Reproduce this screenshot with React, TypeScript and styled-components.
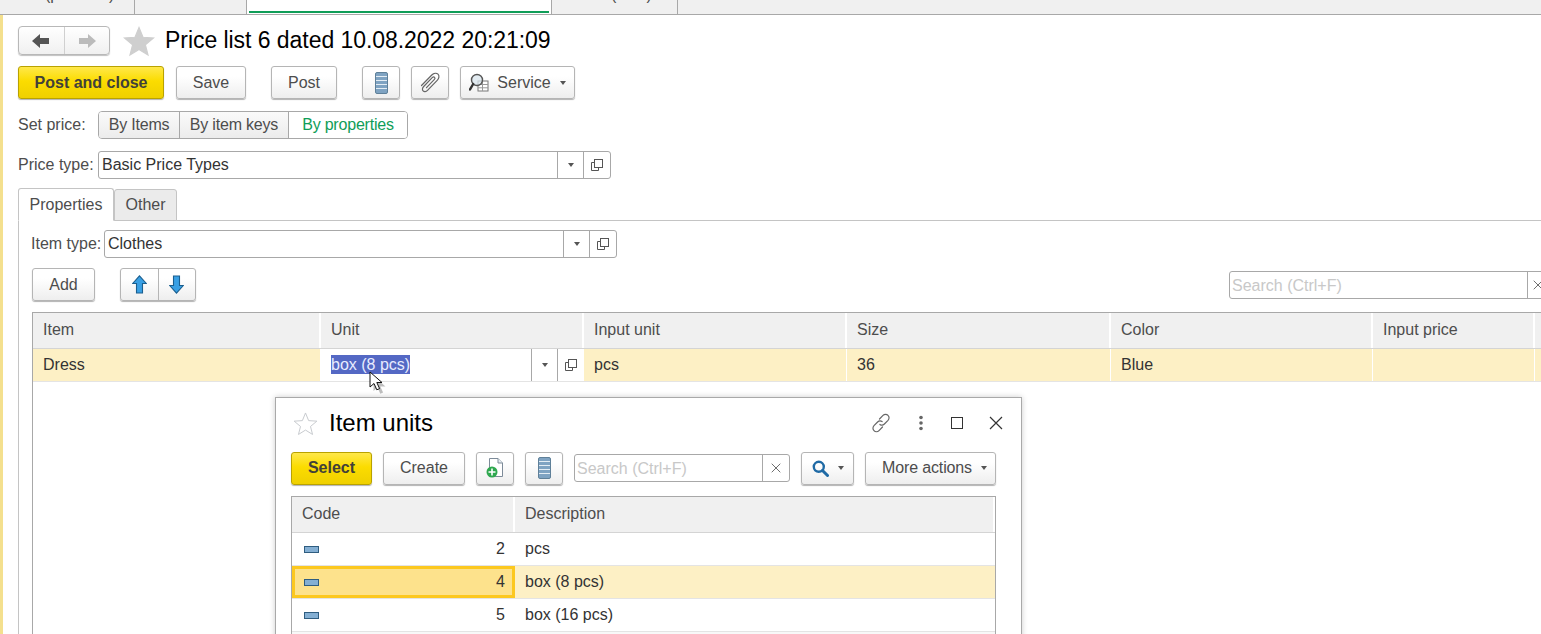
import styled, { createGlobalStyle, css } from "styled-components"

const GlobalStyle = createGlobalStyle`
    html, body {
        margin: 0;
        padding: 0;
        background: #fff;
        overflow: hidden;
    }
    body {
        font-family: "Liberation Sans", Arial, sans-serif;
        font-size: 16px;
        color: #4d4d4d;
    }
    * {
        box-sizing: border-box;
    }
`

const ListIcon = () => (
    <svg width="13" height="22" viewBox="0 0 13 22">
        <rect x="0.5" y="0.5" width="12" height="21" rx="1.5" fill="#7fa3c2" stroke="#5f8099" />
        <path d="M1 4.500h11M1 8.500h11M1 12.500h11M1 16.500h11" stroke="#e4edf4" strokeWidth="1.2" />
    </svg>
)

const ClipIcon = () => (
    <svg width="24" height="24" viewBox="0 0 24 24" fill="none" stroke="#666" strokeWidth="1.2" strokeLinecap="round">
        <path d="M3.500 14.500 13.800 4c2-2 4.700-2.300 6.200-.8 1.500 1.500 1.200 4.100-.8 6.100L9.500 19.300c-1.400 1.400-3.300 1.700-4.400.6-1.100-1.100-.8-3 .6-4.400l8.500-8.800c.8-.8 1.800-1 2.400-.4.600.6.400 1.600-.4 2.400l-7.700 8" />
    </svg>
)

const ServiceIcon = () => (
    <svg width="20" height="20" viewBox="0 0 20 20" fill="none">
        <rect x="9" y="8" width="10" height="10" fill="#fff" stroke="#777" />
        <path d="M9 11.500h10M9 14.800h10M13.500 8v10" stroke="#999" />
        <circle cx="8" cy="7" r="5.500" fill="#d9e6ee" fillOpacity="0.75" stroke="#555" strokeWidth="1.4" />
        <path d="M4.200 11 1 16.500" stroke="#333" strokeWidth="2.4" strokeLinecap="round" />
    </svg>
)

const CopyIcon = () => (
    <svg width="12" height="12" viewBox="0 0 12 12" fill="none" stroke="#555">
        <path d="M3.500 3.500H.5v8h7V8.500" />
        <rect x="3.500" y="0.500" width="8" height="8" fill="#fff" />
    </svg>
)

const LeftArrow = ({ tone }: { tone: string }) => (
    <svg width="18" height="14" viewBox="0 0 18 14">
        <path d="M0 7 8 0v4h9v6H8v4z" fill={tone} />
    </svg>
)

const RightArrow = ({ tone }: { tone: string }) => (
    <svg width="18" height="14" viewBox="0 0 18 14">
        <path d="M18 7 10 0v4H1v6h9v4z" fill={tone} />
    </svg>
)

const BlueUp = () => (
    <svg width="15" height="19" viewBox="0 0 15 19">
        <path d="M7.500.8 14.300 8.500H10.500V18H4.500V8.500H.7z" fill="#39a0e4" stroke="#1b5f8f" strokeWidth="1.1" />
    </svg>
)

const BlueDown = () => (
    <svg width="15" height="19" viewBox="0 0 15 19">
        <path d="M7.500 18.200 14.300 10.500H10.500V1H4.500V10.500H.7z" fill="#39a0e4" stroke="#1b5f8f" strokeWidth="1.1" />
    </svg>
)

const StarIcon = ({ filled }: { filled?: boolean }) => (
    <svg width="32" height="32" viewBox="0 0 32 32">
        <path
            d="M16 2.500 20 12.300 30.500 13 22.400 19.800 25 30 16 24.400 7 30 9.600 19.800 1.500 13 12 12.300z"
            fill={filled ? "#cfcfcf" : "#fff"}
            stroke={filled ? "#cfcfcf" : "#c4c8cc"}
            strokeWidth="1.2"
        />
    </svg>
)

const LinkIcon = () => (
    <svg width="22" height="22" viewBox="0 0 22 22" fill="none" stroke="#666" strokeWidth="1.2" strokeLinecap="round">
        <path d="M9.500 7 13 3.400c1.500-1.500 3.700-1.500 5 0 1.400 1.300 1.400 3.500 0 5L14.400 12c-1.300 1.300-3.200 1.400-4.500.4" />
        <path d="M12.500 15 9 18.600c-1.500 1.500-3.700 1.500-5 0-1.400-1.300-1.400-3.500 0-5L7.600 10c1.300-1.300 3.200-1.400 4.500-.4" />
    </svg>
)

const DotsIcon = () => (
    <svg width="6" height="16" viewBox="0 0 6 16" fill="#666">
        <circle cx="3" cy="2.500" r="1.800" />
        <circle cx="3" cy="8" r="1.800" />
        <circle cx="3" cy="13.500" r="1.800" />
    </svg>
)

const SquareIcon = () => (
    <svg width="12" height="12" viewBox="0 0 12 12" fill="none" stroke="#333">
        <rect x="0.5" y="0.5" width="11" height="11" />
    </svg>
)

const CloseIcon = ({ size, tone }: { size: number; tone: string }) => (
    <svg width={size} height={size} viewBox="0 0 14 14" fill="none" stroke={tone} strokeWidth="1.2">
        <path d="M1 1l12 12M13 1 1 13" />
    </svg>
)

const DocAddIcon = () => (
    <svg width="18" height="20" viewBox="0 0 18 20">
        <path d="M3.500.5H12L16.500 5v13.500H3.500z" fill="#fff" stroke="#7d8b99" />
        <path d="M12 .5V5h4.500" fill="#e8edf2" stroke="#7d8b99" />
        <circle cx="6" cy="14" r="5.500" fill="#2fa84f" />
        <path d="M6 10.500v7M2.500 14h7" stroke="#fff" strokeWidth="1.6" />
    </svg>
)

const SearchIcon = () => (
    <svg width="17" height="17" viewBox="0 0 17 17" fill="none" stroke="#1f6aa5">
        <circle cx="6.800" cy="6.800" r="5" strokeWidth="2.4" />
        <path d="M10.500 10.500 15.500 15.500" strokeWidth="3" strokeLinecap="round" />
    </svg>
)

const UnitIcon = () => (
    <svg width="15" height="7" viewBox="0 0 15 7">
        <rect x="0.5" y="0.5" width="14" height="6" fill="#84afd3" stroke="#2f5d80" />
    </svg>
)

const CursorIcon = () => (
    <svg width="24" height="26" viewBox="0 0 24 26">
        <path d="M3 3v15l4-3.500 2.800 6.300 2.800-1.200-2.800-6.100H15z" fill="#444" opacity="0.35" transform="translate(2.500 2)" />
        <path d="M2 1v15l4-3.500 2.800 6.300 2.800-1.200-2.800-6.100H14z" fill="#fff" stroke="#111" strokeWidth="1" />
    </svg>
)

const tabsData = [
    { width: 135, text: "(price list)", pad: 45 },
    { width: 112, text: "", pad: 0 },
    { width: 305, text: "", pad: 0, active: true },
    { width: 126, text: "(item)", pad: 59 },
]

const columns = ["Item", "Unit", "Input unit", "Size", "Color", "Input price", ""]

function App() {
    return (
        <Page>
            <GlobalStyle />
            <TopBar>
                {tabsData.map((tab, i) => (
                    <TopTab key={i} $width={tab.width} $pad={tab.pad} $active={tab.active}>
                        <TopTabText>{tab.text}</TopTabText>
                    </TopTab>
                ))}
            </TopBar>
            <Body>
                <Title>
                    <NavGroup>
                        <NavButton>
                            <LeftArrow tone="#555" />
                        </NavButton>
                        <NavButton>
                            <RightArrow tone="#bbb" />
                        </NavButton>
                    </NavGroup>
                    <StarSlot>
                        <StarIcon filled />
                    </StarSlot>
                    <Heading>Price list 6 dated 10.08.2022 20:21:09</Heading>
                </Title>

                <Toolbar>
                    <Button $primary $width={146} $height={33} $after={12}>
                        Post and close
                    </Button>
                    <Button $width={70} $height={33} $after={25}>
                        Save
                    </Button>
                    <Button $width={66} $height={33} $after={25}>
                        Post
                    </Button>
                    <Button $width={38} $height={33} $after={11}>
                        <ListIcon />
                    </Button>
                    <Button $width={38} $height={33} $after={11}>
                        <ClipIcon />
                    </Button>
                    <Button $width={115} $height={33}>
                        <ServiceIcon />
                        <ButtonLabel $left={8}>Service</ButtonLabel>
                        <Caret $left={9} />
                    </Button>
                </Toolbar>

                <FormRow $top={12}>
                    <Label $width={80}>Set price:</Label>
                    <Switcher>
                        <SwitchItem $width={80}>By Items</SwitchItem>
                        <SwitchItem $width={109}>By item keys</SwitchItem>
                        <SwitchItem $width={119} $active>
                            By properties
                        </SwitchItem>
                    </Switcher>
                </FormRow>

                <FormRow $top={12}>
                    <Label $width={80}>Price type:</Label>
                    <Field $width={513}>
                        <FieldText>Basic Price Types</FieldText>
                        <FieldButton $width={26}>
                            <Caret />
                        </FieldButton>
                        <FieldButton $width={27}>
                            <CopyIcon />
                        </FieldButton>
                    </Field>
                </FormRow>

                <TabStrip>
                    <PanelTab $active>Properties</PanelTab>
                    <PanelTab>Other</PanelTab>
                </TabStrip>

                <Panel>
                    <FormRow $top={9} $left={-1}>
                        <Label $width={73}>Item type:</Label>
                        <Field $width={513}>
                            <FieldText>Clothes</FieldText>
                            <FieldButton $width={26}>
                                <Caret />
                            </FieldButton>
                            <FieldButton $width={27}>
                                <CopyIcon />
                            </FieldButton>
                        </Field>
                    </FormRow>

                    <CommandRow>
                        <Button $width={63} $height={33} $after={25}>
                            Add
                        </Button>
                        <ArrowGroup>
                            <ArrowButton>
                                <BlueUp />
                            </ArrowButton>
                            <ArrowButton>
                                <BlueDown />
                            </ArrowButton>
                        </ArrowGroup>
                        <SearchBox $width={320} $push>
                            <SearchText>Search (Ctrl+F)</SearchText>
                            <SearchClear $width={21}>
                                <CloseIcon size={10} tone="#555" />
                            </SearchClear>
                        </SearchBox>
                    </CommandRow>

                    <GridTable>
                        <HeaderRow>
                            {columns.map((title, i) => (
                                <HeaderCell key={i}>{title}</HeaderCell>
                            ))}
                        </HeaderRow>
                        <MainRow>
                            <RowCell>Dress</RowCell>
                            <EditCell>
                                <EditValue>
                                    <Selected>box (8 pcs)</Selected>
                                </EditValue>
                                <EditButton $width={26}>
                                    <Caret />
                                </EditButton>
                                <EditButton $width={27}>
                                    <CopyIcon />
                                </EditButton>
                            </EditCell>
                            <RowCell>pcs</RowCell>
                            <RowCell>36</RowCell>
                            <RowCell>Blue</RowCell>
                            <RowCell />
                            <RowCell />
                        </MainRow>
                    </GridTable>
                </Panel>
            </Body>

            <MouseCursor>
                <CursorIcon />
            </MouseCursor>

            <Popup>
                <PopupHead>
                    <PopupStar>
                        <StarIcon />
                    </PopupStar>
                    <PopupTitle>Item units</PopupTitle>
                    <PopupActions>
                        <LinkIcon />
                        <DotsIcon />
                        <SquareIcon />
                        <CloseIcon size={14} tone="#333" />
                    </PopupActions>
                </PopupHead>
                <PopupToolbar>
                    <Button $primary $width={81} $height={33} $after={11}>
                        Select
                    </Button>
                    <Button $width={82} $height={33} $after={11}>
                        Create
                    </Button>
                    <Button $width={38} $height={33} $after={11}>
                        <DocAddIcon />
                    </Button>
                    <Button $width={38} $height={33} $after={11}>
                        <ListIcon />
                    </Button>
                    <SearchBox $width={216}>
                        <SearchText>Search (Ctrl+F)</SearchText>
                        <SearchClear $width={27}>
                            <CloseIcon size={10} tone="#555" />
                        </SearchClear>
                    </SearchBox>
                    <Button $width={53} $height={33} $before={11} $after={11}>
                        <SearchIcon />
                        <Caret $left={9} />
                    </Button>
                    <Button $width={131} $height={33}>
                        <ButtonLabel $tight>More actions</ButtonLabel>
                        <Caret $left={9} />
                    </Button>
                </PopupToolbar>
                <PopupTable>
                    <PopupHeader>
                        <HeaderCell>Code</HeaderCell>
                        <HeaderCell>Description</HeaderCell>
                    </PopupHeader>
                    {[
                        { code: 2, name: "pcs" },
                        { code: 4, name: "box (8 pcs)", current: true },
                        { code: 5, name: "box (16 pcs)" },
                    ].map((row) => (
                        <PopupRow key={row.code} $current={row.current}>
                            <CodeCell $current={row.current}>
                                <UnitIcon />
                                <span>{row.code}</span>
                            </CodeCell>
                            <NameCell>{row.name}</NameCell>
                        </PopupRow>
                    ))}
                    <PopupFiller />
                </PopupTable>
            </Popup>
        </Page>
    )
}

export default App

const Page = styled.div`
    position: relative;
    width: 1541px;
    height: 634px;
    overflow: hidden;
    display: flex;
    flex-direction: column;
`

const TopBar = styled.div`
    height: 15px;
    flex: none;
    display: flex;
    background: #f0f0f0;
    border-bottom: 1px solid #a8a8a8;
`

const TopTab = styled.div<{ $width: number; $pad: number; $active?: boolean }>`
    width: ${(p) => p.$width}px;
    padding-left: ${(p) => p.$pad}px;
    border-right: 1px solid #a8a8a8;
    overflow: hidden;
    ${(p) =>
        p.$active &&
        css`
            background: #fff;
            position: relative;
            &::after {
                content: "";
                position: absolute;
                left: 2px;
                right: 2px;
                bottom: 1px;
                height: 2px;
                background: #0f9d58;
            }
        `}
`

const TopTabText = styled.div`
    margin-top: -13px;
    font-size: 16px;
    line-height: 16px;
    white-space: nowrap;
    color: #4d4d4d;
`

const Body = styled.div`
    flex: 1;
    min-height: 0;
    display: flex;
    flex-direction: column;
    border-left: 3px solid #f4e08e;
    padding-top: 11px;
    padding-left: 15px;
`

const Title = styled.div`
    display: flex;
    align-items: center;
    height: 29px;
`

const NavGroup = styled.div`
    display: flex;
    width: 92px;
    height: 29px;
    border: 1px solid #b8b8b8;
    border-radius: 4px;
    box-shadow: 0 1px 1px rgba(0, 0, 0, 0.25);
    background: linear-gradient(#fff, #f0f0f0);
`

const NavButton = styled.div`
    flex: 1;
    display: flex;
    align-items: center;
    justify-content: center;
    & + & {
        border-left: 1px solid #d0d0d0;
    }
`

const StarSlot = styled.div`
    display: flex;
    margin-left: 13px;
    width: 42px;
`

const Heading = styled.h1`
    margin: 0;
    font-size: 23px;
    font-weight: 400;
    letter-spacing: -0.05px;
    color: #000;
    white-space: nowrap;
`

const Toolbar = styled.div`
    display: flex;
    margin-top: 11px;
`

const Button = styled.div<{
    $primary?: boolean
    $width: number
    $height: number
    $after?: number
    $before?: number
}>`
    display: flex;
    align-items: center;
    justify-content: center;
    flex: none;
    width: ${(p) => p.$width}px;
    height: ${(p) => p.$height}px;
    margin-right: ${(p) => p.$after ?? 0}px;
    margin-left: ${(p) => p.$before ?? 0}px;
    border-radius: 3px;
    font-size: 16px;
    color: #4d4d4d;
    border: 1px solid #b5b5b5;
    background: linear-gradient(#fff 30%, #eeeeee);
    box-shadow: 0 1px 1px rgba(0, 0, 0, 0.3);
    ${(p) =>
        p.$primary &&
        css`
            font-weight: 700;
            color: #41403a;
            border-color: #b9a200;
            background: linear-gradient(#ffe84a, #fbdc00 45%, #efd000);
        `}
`

const ButtonLabel = styled.span<{ $left?: number; $tight?: boolean }>`
    margin-left: ${(p) => p.$left ?? 0}px;
    letter-spacing: ${(p) => (p.$tight ? "-0.15px" : "normal")};
    padding-left: ${(p) => (p.$tight ? "8px" : "0")};
`

const Caret = styled.span<{ $left?: number }>`
    display: inline-block;
    margin-left: ${(p) => p.$left ?? 0}px;
    width: 0;
    height: 0;
    border-left: 3.5px solid transparent;
    border-right: 3.5px solid transparent;
    border-top: 4px solid #555;
`

const FormRow = styled.div<{ $top: number; $left?: number }>`
    display: flex;
    align-items: center;
    margin-top: ${(p) => p.$top}px;
    margin-left: ${(p) => p.$left ?? 0}px;
`

const Label = styled.div<{ $width: number }>`
    width: ${(p) => p.$width}px;
    flex: none;
    color: #4d4d4d;
    white-space: nowrap;
`

const Switcher = styled.div`
    display: flex;
    height: 28px;
    border: 1px solid #a8a8a8;
    border-radius: 4px;
    overflow: hidden;
`

const SwitchItem = styled.div<{ $width: number; $active?: boolean }>`
    width: ${(p) => p.$width}px;
    display: flex;
    align-items: center;
    justify-content: center;
    letter-spacing: -0.2px;
    color: ${(p) => (p.$active ? "#0f9d58" : "#4d4d4d")};
    background: ${(p) => (p.$active ? "#fff" : "linear-gradient(#fafafa, #ececec)")};
    & + & {
        border-left: 1px solid #a8a8a8;
    }
`

const Field = styled.div<{ $width: number }>`
    display: flex;
    align-items: stretch;
    width: ${(p) => p.$width}px;
    height: 28px;
    border: 1px solid #a8a8a8;
    border-radius: 3px;
    background: #fff;
`

const FieldText = styled.div`
    flex: 1;
    padding-left: 3px;
    line-height: 26px;
    color: #333;
`

const FieldButton = styled.div<{ $width: number }>`
    width: ${(p) => p.$width}px;
    display: flex;
    align-items: center;
    justify-content: center;
    border-left: 1px solid #a8a8a8;
`

const TabStrip = styled.div`
    display: flex;
    align-items: flex-end;
    margin-top: 9px;
    position: relative;
    z-index: 1;
    height: 33px;
    margin-bottom: -1px;
`

const PanelTab = styled.div<{ $active?: boolean }>`
    display: flex;
    align-items: center;
    justify-content: center;
    border: 1px solid #c4c4c4;
    border-radius: 3px 3px 0 0;
    color: #4d4d4d;
    ${(p) =>
        p.$active
            ? css`
                  width: 96px;
                  height: 33px;
                  background: #fff;
                  border-bottom-color: #fff;
              `
            : css`
                  width: 63px;
                  height: 32px;
                  background: #ebebeb;
              `}
`

const Panel = styled.div`
    flex: 1;
    min-height: 0;
    padding-left: 13px;
    border-left: 1px solid #c4c4c4;
    border-top: 1px solid #c4c4c4;
    display: flex;
    flex-direction: column;
`

const CommandRow = styled.div`
    display: flex;
    align-items: center;
    margin-top: 10px;
`

const ArrowGroup = styled.div`
    display: flex;
    flex: none;
    width: 76px;
    height: 33px;
    border: 1px solid #b5b5b5;
    border-radius: 3px;
    background: linear-gradient(#fff 30%, #eeeeee);
    box-shadow: 0 1px 1px rgba(0, 0, 0, 0.3);
`

const ArrowButton = styled.div`
    flex: 1;
    display: flex;
    align-items: center;
    justify-content: center;
    & + & {
        border-left: 1px solid #b5b5b5;
    }
`

const SearchBox = styled.div<{ $width: number; $push?: boolean }>`
    display: flex;
    flex: none;
    width: ${(p) => p.$width}px;
    height: 28px;
    margin-left: ${(p) => (p.$push ? "1033px" : "0")};
    border: 1px solid #a8a8a8;
    border-radius: 3px;
    background: #fff;
`

const SearchText = styled.div`
    flex: 1;
    padding-left: 2px;
    line-height: 27px;
    color: #c8c8c8;
`

const SearchClear = styled.div<{ $width: number }>`
    width: ${(p) => p.$width}px;
    display: flex;
    align-items: center;
    justify-content: center;
    border-left: 1px solid #a8a8a8;
`

const GridTable = styled.div`
    flex: 1;
    margin-top: 11px;
    min-height: 0;
    border-top: 1px solid #a8a8a8;
    border-left: 1px solid #a8a8a8;
`

const mainColumns = "288px 263px 263px 264px 262px 162px 1fr"

const HeaderRow = styled.div`
    display: grid;
    grid-template-columns: ${mainColumns};
    height: 36px;
    background: #f0f0f0;
    border-bottom: 1px solid #d4d4d4;
`

const HeaderCell = styled.div`
    padding-left: 10px;
    line-height: 33px;
    color: #4d4d4d;
    border-right: 2px solid #fff;
    white-space: nowrap;
    overflow: hidden;
`

const MainRow = styled.div`
    display: grid;
    grid-template-columns: ${mainColumns};
    height: 33px;
    background: #fdf0c5;
    border-bottom: 1px solid #e4e4e4;
`

const RowCell = styled.div`
    padding-left: 10px;
    line-height: 32px;
    color: #333;
    border-right: 1px solid #fff;
`

const EditCell = styled.div`
    display: flex;
    background: #fff;
`

const EditValue = styled.div`
    flex: 1;
    padding-left: 10px;
    line-height: 32px;
`

const Selected = styled.span`
    display: inline-block;
    height: 19px;
    line-height: 19px;
    background: #5468c4;
    color: #e8ecff;
`

const EditButton = styled.div<{ $width: number }>`
    width: ${(p) => p.$width}px;
    display: flex;
    align-items: center;
    justify-content: center;
    border-left: 1px solid #a8a8a8;
`

const MouseCursor = styled.div`
    position: absolute;
    left: 368px;
    top: 371px;
    z-index: 3;
    display: flex;
`

const Popup = styled.div`
    position: absolute;
    left: 275px;
    top: 397px;
    z-index: 2;
    width: 747px;
    height: 260px;
    padding: 0 25px 0 15px;
    border: 1px solid #a9a9a9;
    background: #fff;
    box-shadow: 0 0 6px rgba(0, 0, 0, 0.2);
`

const PopupHead = styled.div`
    display: flex;
    align-items: center;
    height: 50px;
`

const PopupStar = styled.div`
    display: flex;
    width: 38px;
    padding-left: 2px;
    & svg {
        width: 25px;
        height: 25px;
    }
`

const PopupTitle = styled.div`
    font-size: 24px;
    color: #000;
    flex: 1;
`

const PopupActions = styled.div`
    display: flex;
    align-items: center;
    justify-content: space-between;
    width: 133px;
    margin-right: -7px;
`

const PopupToolbar = styled.div`
    display: flex;
    align-items: center;
    height: 36px;
    margin-top: 2px;
`

const PopupTable = styled.div`
    margin-top: 10px;
    border: 1px solid #a8a8a8;
    border-bottom: none;
`

const PopupHeader = styled.div`
    display: grid;
    grid-template-columns: 223px 1fr;
    height: 36px;
    background: #f0f0f0;
    border-bottom: 1px solid #d4d4d4;
`

const PopupRow = styled.div<{ $current?: boolean }>`
    display: grid;
    grid-template-columns: 223px 1fr;
    height: 33px;
    background: ${(p) => (p.$current ? "#fdf0c5" : "#fff")};
    border-bottom: 1px solid #e4e4e4;
`

const PopupFiller = styled.div`
    height: 30px;
    background: #f8f8f8;
`

const CodeCell = styled.div<{ $current?: boolean }>`
    display: flex;
    align-items: center;
    justify-content: space-between;
    padding: 0 10px 0 12px;
    color: #333;
    ${(p) =>
        p.$current &&
        css`
            background: #fde28c;
            border: 3px solid #fcc81f;
            padding: 0 7px 0 9px;
        `}
`

const NameCell = styled.div`
    padding-left: 10px;
    line-height: 32px;
    color: #333;
`
